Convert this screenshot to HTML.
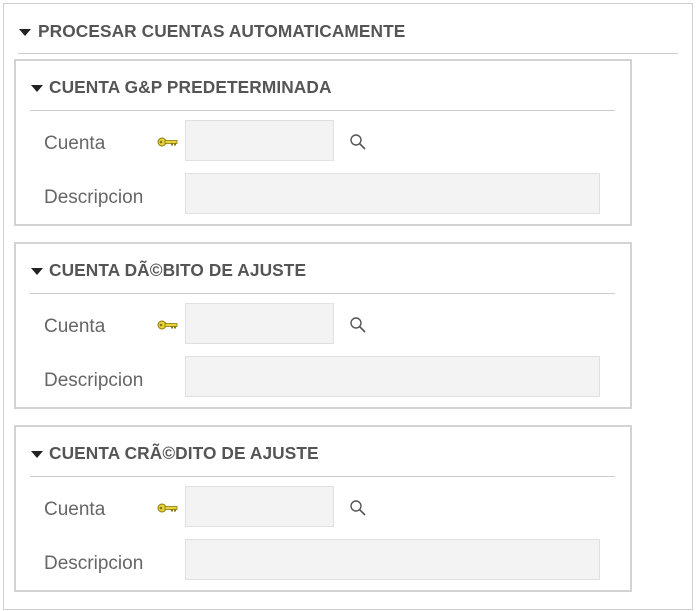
<!DOCTYPE html>
<html><head><meta charset="utf-8"><style>
*{margin:0;padding:0;box-sizing:border-box}
body{width:700px;height:611px;background:#fff;font-family:"Liberation Sans",sans-serif;position:relative;overflow:hidden}
.abs{position:absolute}
.outer{left:3px;top:3px;width:690px;height:607px;border:1px solid #cfcfcf}
.hdr{font-weight:bold;color:#555;font-size:17.3px;letter-spacing:0.1px;white-space:nowrap}
.tri{width:0;height:0;border-left:6px solid transparent;border-right:6px solid transparent;border-top:7px solid #222}
.line{height:1px;background:#ccc}
.box{border:2px solid #d3d3d3;width:618px;height:167px}
.lbl{color:#666;font-size:19px}
.inp{background:#f3f3f3;border:1px solid #e0e0e0}
</style></head><body>
<div class="abs outer"></div>
<div class="abs tri" style="left:19px;top:29px"></div>
<div class="abs hdr" style="left:38px;top:21px">PROCESAR CUENTAS AUTOMATICAMENTE</div>
<div class="abs line" style="left:18px;top:53px;width:660px"></div>

<div id="s"></div>
<script>
var titles=["CUENTA G&amp;P PREDETERMINADA","CUENTA DÃ©BITO DE AJUSTE","CUENTA CRÃ©DITO DE AJUSTE"];
var h="";
for(var i=0;i<3;i++){var t=59+i*183;
h+='<div class="abs box" style="left:14px;top:'+t+'px"></div>';
h+='<div class="abs tri" style="left:31px;top:'+(t+26)+'px"></div>';
h+='<div class="abs hdr" style="left:49px;top:'+(t+18)+'px">'+titles[i]+'</div>';
h+='<div class="abs line" style="left:30px;top:'+(t+51)+'px;width:585px"></div>';
h+='<div class="abs lbl" style="left:44px;top:'+(t+74)+'px">Cuenta</div>';
h+='<div class="abs lbl" style="left:44px;top:'+(t+128)+'px">Descripcion</div>';
h+='<svg class="abs" style="left:157px;top:'+(t+77)+'px" width="22" height="12" viewBox="0 0 22 12"><circle cx="5" cy="6" r="4" fill="#e6d23a" stroke="#8a7a10" stroke-width="1"/><circle cx="4" cy="6" r="1.3" fill="#8a7a10"/><rect x="8" y="4.5" width="12" height="3" fill="#e6d23a" stroke="#8a7a10" stroke-width="0.8"/><rect x="14" y="7" width="2" height="2.5" fill="#8a7a10"/><rect x="17" y="7" width="2" height="2.5" fill="#8a7a10"/></svg>';
h+='<div class="abs inp" style="left:185px;top:'+(t+61)+'px;width:149px;height:41px"></div>';
h+='<svg class="abs" style="left:349px;top:'+(t+74)+'px" width="19" height="18" viewBox="0 0 19 18"><circle cx="7" cy="7" r="5" fill="none" stroke="#555" stroke-width="1.4"/><line x1="10.7" y1="10.7" x2="16" y2="16" stroke="#555" stroke-width="1.6"/></svg>';
h+='<div class="abs inp" style="left:185px;top:'+(t+114)+'px;width:415px;height:41px"></div>';
}
document.getElementById("s").innerHTML=h;
</script>
</body></html>
